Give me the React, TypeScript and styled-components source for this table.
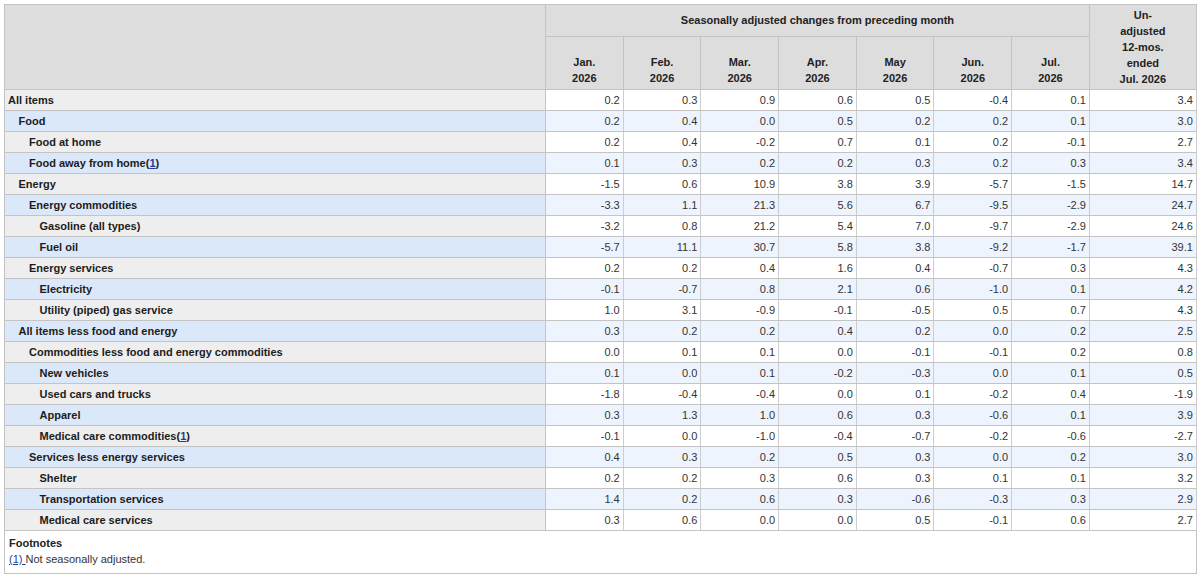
import styled, { createGlobalStyle } from 'styled-components'

const GlobalStyle = createGlobalStyle`
  html, body {
    margin: 0;
    padding: 0;
    background: #ffffff;
  }
  body {
    font-family: "Liberation Sans", Arial, sans-serif;
    font-size: 11px;
    color: #222222;
  }
`

type Row = {
  label: string
  level: number
  note?: boolean
  values: string[]
  annual: string
}

const rows: Row[] = [
  { label: 'All items', level: 0, values: ['0.2', '0.3', '0.9', '0.6', '0.5', '-0.4', '0.1'], annual: '3.4' },
  { label: 'Food', level: 1, values: ['0.2', '0.4', '0.0', '0.5', '0.2', '0.2', '0.1'], annual: '3.0' },
  { label: 'Food at home', level: 2, values: ['0.2', '0.4', '-0.2', '0.7', '0.1', '0.2', '-0.1'], annual: '2.7' },
  { label: 'Food away from home', level: 2, note: true, values: ['0.1', '0.3', '0.2', '0.2', '0.3', '0.2', '0.3'], annual: '3.4' },
  { label: 'Energy', level: 1, values: ['-1.5', '0.6', '10.9', '3.8', '3.9', '-5.7', '-1.5'], annual: '14.7' },
  { label: 'Energy commodities', level: 2, values: ['-3.3', '1.1', '21.3', '5.6', '6.7', '-9.5', '-2.9'], annual: '24.7' },
  { label: 'Gasoline (all types)', level: 3, values: ['-3.2', '0.8', '21.2', '5.4', '7.0', '-9.7', '-2.9'], annual: '24.6' },
  { label: 'Fuel oil', level: 3, values: ['-5.7', '11.1', '30.7', '5.8', '3.8', '-9.2', '-1.7'], annual: '39.1' },
  { label: 'Energy services', level: 2, values: ['0.2', '0.2', '0.4', '1.6', '0.4', '-0.7', '0.3'], annual: '4.3' },
  { label: 'Electricity', level: 3, values: ['-0.1', '-0.7', '0.8', '2.1', '0.6', '-1.0', '0.1'], annual: '4.2' },
  { label: 'Utility (piped) gas service', level: 3, values: ['1.0', '3.1', '-0.9', '-0.1', '-0.5', '0.5', '0.7'], annual: '4.3' },
  { label: 'All items less food and energy', level: 1, values: ['0.3', '0.2', '0.2', '0.4', '0.2', '0.0', '0.2'], annual: '2.5' },
  { label: 'Commodities less food and energy commodities', level: 2, values: ['0.0', '0.1', '0.1', '0.0', '-0.1', '-0.1', '0.2'], annual: '0.8' },
  { label: 'New vehicles', level: 3, values: ['0.1', '0.0', '0.1', '-0.2', '-0.3', '0.0', '0.1'], annual: '0.5' },
  { label: 'Used cars and trucks', level: 3, values: ['-1.8', '-0.4', '-0.4', '0.0', '0.1', '-0.2', '0.4'], annual: '-1.9' },
  { label: 'Apparel', level: 3, values: ['0.3', '1.3', '1.0', '0.6', '0.3', '-0.6', '0.1'], annual: '3.9' },
  { label: 'Medical care commodities', level: 3, note: true, values: ['-0.1', '0.0', '-1.0', '-0.4', '-0.7', '-0.2', '-0.6'], annual: '-2.7' },
  { label: 'Services less energy services', level: 2, values: ['0.4', '0.3', '0.2', '0.5', '0.3', '0.0', '0.2'], annual: '3.0' },
  { label: 'Shelter', level: 3, values: ['0.2', '0.2', '0.3', '0.6', '0.3', '0.1', '0.1'], annual: '3.2' },
  { label: 'Transportation services', level: 3, values: ['1.4', '0.2', '0.6', '0.3', '-0.6', '-0.3', '0.3'], annual: '2.9' },
  { label: 'Medical care services', level: 3, values: ['0.3', '0.6', '0.0', '0.0', '0.5', '-0.1', '0.6'], annual: '2.7' },
]

const months = ['Jan.', 'Feb.', 'Mar.', 'Apr.', 'May', 'Jun.', 'Jul.']

const Page = styled.div`
  padding: 4px 0 0 4px;
`

const Table = styled.table`
  width: 1192px;
  table-layout: fixed;
  border-collapse: collapse;
  border: 1px solid #c2c2c2;
  font-family: "Liberation Sans", Arial, sans-serif;
  font-size: 11px;
`

const HeadCell = styled.th`
  background: #dddddd;
  border: 1px solid #c4c4c4;
  color: #222222;
  font-weight: bold;
  text-align: center;
  vertical-align: bottom;
  line-height: 16px;
  padding: 0 4px;
`

const TitleCell = styled(HeadCell)`
  height: 30px;
  padding: 0 4px 1px;
  vertical-align: middle;
`

const MonthCell = styled(HeadCell)`
  height: 49px;
  padding-bottom: 3px;
`

const NoteHead = styled(HeadCell)`
  vertical-align: middle;
  padding: 0 4px 1px;
`

const BodyRow = styled.tr<{ $even: boolean }>`
  height: 21px;

  th {
    background: ${({ $even }) => ($even ? '#dbe8fa' : '#eeeeee')};
  }
  td {
    background: ${({ $even }) => ($even ? '#eef4fd' : '#ffffff')};
  }
`

const Label = styled.th<{ $level: number }>`
  border-top: 1px solid #c4c4c4;
  border-bottom: 1px solid #c4c4c4;
  border-right: 1px solid #c4c4c4;
  color: #1c1c1c;
  font-weight: bold;
  text-align: left;
  padding: 0 4px 0 ${({ $level }) => 3 + $level * 10.5}px;
  white-space: nowrap;
  line-height: 20px;
`

const Value = styled.td`
  border: 1px solid #cdcdcd;
  border-top-color: #c4c4c4;
  border-bottom-color: #c4c4c4;
  color: #333333;
  text-align: right;
  padding: 0 3px 0 4px;
  line-height: 20px;
`

const NoteLink = styled.a`
  color: #1a3f99;
  text-decoration: underline;
`

const FootCell = styled.td`
  background: #ffffff;
  border: 1px solid #c2c2c2;
  padding: 4px 4px 6px;
  line-height: 16px;
  color: #222222;
`

const FootTitle = styled.div`
  font-weight: bold;
`

const FootNote = styled.div`
  color: #333333;
`

const Note = () => (
  <>
    (<NoteLink href="#">1</NoteLink>)
  </>
)

export default function App() {
  return (
    <>
      <GlobalStyle />
      <Page>
        <Table>
          <colgroup>
            <col style={{ width: 541 }} />
            {months.map((m) => (
              <col key={m} style={{ width: 77.7 }} />
            ))}
            <col style={{ width: 107 }} />
          </colgroup>
          <thead>
            <tr>
              <HeadCell rowSpan={2} />
              <TitleCell colSpan={7}>Seasonally adjusted changes from preceding month</TitleCell>
              <NoteHead rowSpan={2}>
                Un-
                <br />
                adjusted
                <br />
                12-mos.
                <br />
                ended
                <br />
                Jul. 2026
              </NoteHead>
            </tr>
            <tr>
              {months.map((m) => (
                <MonthCell key={m}>
                  {m}
                  <br />
                  2026
                </MonthCell>
              ))}
            </tr>
          </thead>
          <tbody>
            {rows.map((r, i) => (
              <BodyRow key={r.label} $even={i % 2 === 1}>
                <Label $level={r.level}>
                  {r.label}
                  {r.note && <Note />}
                </Label>
                {r.values.map((v, j) => (
                  <Value key={j}>{v}</Value>
                ))}
                <Value>{r.annual}</Value>
              </BodyRow>
            ))}
          </tbody>
          <tfoot>
            <tr>
              <FootCell colSpan={9}>
                <FootTitle>Footnotes</FootTitle>
                <FootNote>
                  <NoteLink href="#">(1) </NoteLink>Not seasonally adjusted.
                </FootNote>
              </FootCell>
            </tr>
          </tfoot>
        </Table>
      </Page>
    </>
  )
}
